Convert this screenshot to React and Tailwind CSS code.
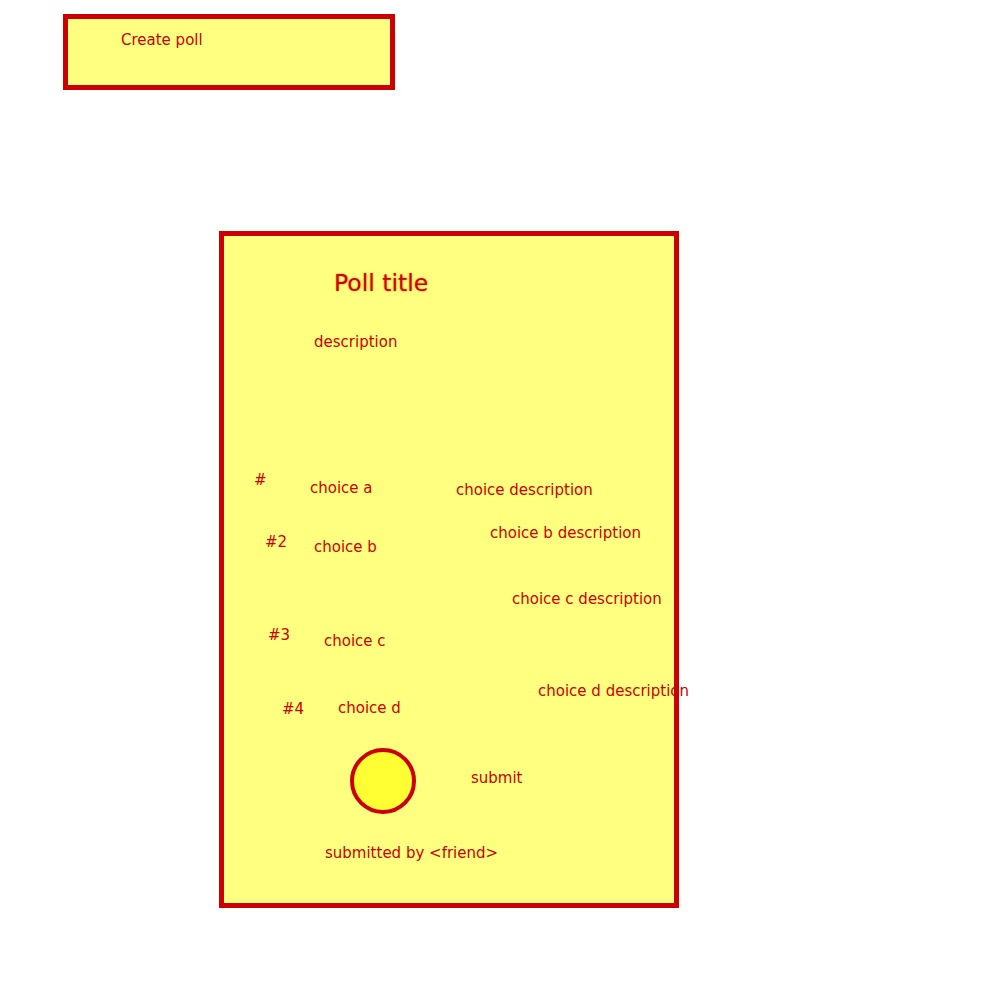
import React from "react";

const items = [
  { t: "description", l: 91, top: 98 },
  { t: "#", l: 31, top: 236 },
  { t: "choice a", l: 87, top: 244 },
  { t: "choice description", l: 233, top: 246 },
  { t: "#2", l: 42, top: 298 },
  { t: "choice b", l: 91, top: 303 },
  { t: "choice b description", l: 267, top: 289 },
  { t: "choice c description", l: 289, top: 355 },
  { t: "#3", l: 45, top: 391 },
  { t: "choice c", l: 101, top: 397 },
  { t: "choice d description", l: 315, top: 447 },
  { t: "#4", l: 59, top: 465 },
  { t: "choice d", l: 115, top: 464 },
  { t: "submit", l: 248, top: 534 },
  { t: "submitted by <friend>", l: 102, top: 609 },
];

export default function App() {
  return (
    <div className="w-[1000px] h-[1000px] bg-white overflow-hidden font-['DejaVu_Sans',sans-serif] text-[#cc0000]">
      <div className="ml-[63px] mt-[14px] w-[332px] h-[76px] border-[5px] border-[#cc0000] bg-[#ffff80] pl-[53px] pt-[12px] text-[15px] leading-[18px]">
        Create poll
      </div>
      <div className="relative ml-[219px] mt-[141px] w-[460px] h-[677px] border-[5px] border-[#cc0000] bg-[#ffff80]">
        <div className="absolute left-[110px] top-[34px] text-[23.5px] leading-[27px] whitespace-nowrap [text-shadow:0_0_2px_#ff8c00]">
          Poll title
        </div>
        {items.map((it, i) => (
          <div
            key={i}
            className="absolute z-10 text-[15px] leading-[18px] whitespace-nowrap"
            style={{ left: it.l - 1, top: it.top - 1 }}
          >
            {it.t}
          </div>
        ))}
        <div className="absolute left-[126px] top-[512px] w-[66px] h-[66px] rounded-full border-[4.5px] border-[#cc0000] bg-[#ffff33]" />
      </div>
    </div>
  );
}
